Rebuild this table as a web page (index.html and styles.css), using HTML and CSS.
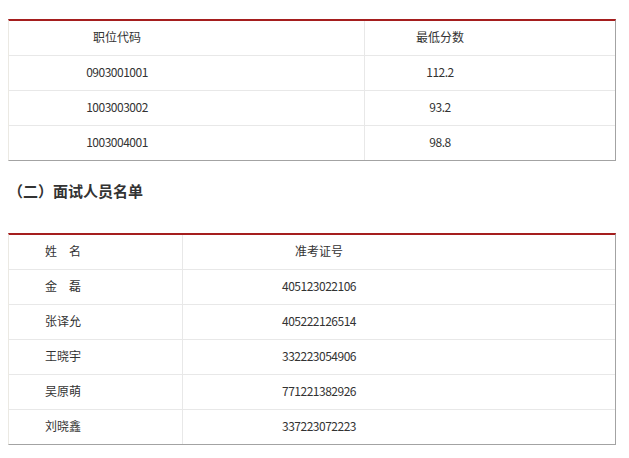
FILE: index.html
```html
<!DOCTYPE html>
<html lang="zh-CN">
<head>
<meta charset="utf-8">
<title>面试名单</title>
<link rel="stylesheet" href="styles.css">
</head>
<body>
<table class="grid grid-score">
  <colgroup><col class="c-code"><col class="c-score"></colgroup>
  <tr><td class="a">职位代码</td><td class="b">最低分数</td></tr>
  <tr><td class="a num">0903001001</td><td class="b num">112.2</td></tr>
  <tr><td class="a num">1003003002</td><td class="b num">93.2</td></tr>
  <tr class="last"><td class="a num">1003004001</td><td class="b num">98.8</td></tr>
</table>
<h3 class="section-title">（二）面试人员名单</h3>
<table class="grid grid-list">
  <colgroup><col class="c-name"><col class="c-id"></colgroup>
  <tr><td class="n">姓　名</td><td class="i">准考证号</td></tr>
  <tr><td class="n">金　磊</td><td class="i num">405123022106</td></tr>
  <tr><td class="n">张译允</td><td class="i num">405222126514</td></tr>
  <tr><td class="n">王晓宇</td><td class="i num">332223054906</td></tr>
  <tr><td class="n">吴原萌</td><td class="i num">771221382926</td></tr>
  <tr class="last"><td class="n">刘晓鑫</td><td class="i num">337223072223</td></tr>
</table>
</body>
</html>
```

FILE: styles.css
```css
html, body {
  background: #fff;
}
body {
  margin: 8px;
  font-family: "Noto Sans CJK SC", "Liberation Sans", sans-serif;
  font-size: 12px;
  color: #333;
}
.grid {
  width: 608px;
  border-collapse: separate;
  border-spacing: 0;
  table-layout: fixed;
  border-top: 2px solid #a51e1e;
  border-left: 1px solid #ebe9e3;
  border-right: 1px solid #a3a3a3;
  border-bottom: 1px solid #a3a3a3;
}
.grid-score {
  margin-top: 11px;
}
.grid td {
  height: 32px;
  padding: 0 0 2px 0;
  text-align: center;
  vertical-align: middle;
  border-bottom: 1px solid #e8e8e8;
  line-height: 16px;
}
.grid tr.last td {
  border-bottom: 0;
}
.grid td.a, .grid td.n {
  border-right: 1px solid #e8e8e8;
}
.grid td.num {
  letter-spacing: -0.5px;
}
.c-code { width: 356px; }
.c-score { width: 250px; }
.c-name { width: 174px; }
.c-id { width: 432px; }
.grid td.a { padding-right: 139px; }
.grid td.b { padding-right: 100px; }
.grid td.n { text-align: left; padding-left: 36px; }
.grid td.i { padding-right: 160px; }
.section-title {
  margin: 20px 0 32px 0;
  font-size: 15px;
  line-height: 20px;
  font-weight: bold;
  color: #333;
}
```
